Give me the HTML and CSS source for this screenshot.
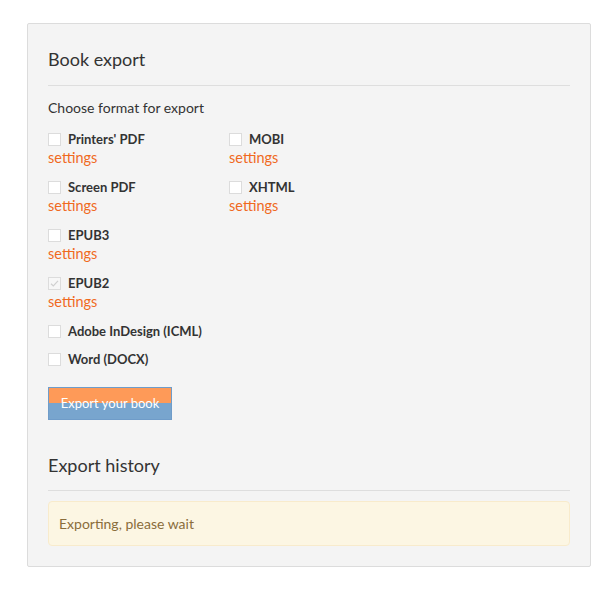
FILE: index.html
```html
<!DOCTYPE html>
<html>
<head>
<meta charset="utf-8">
<link rel="stylesheet" href="styles.css">
</head>
<body>
<div class="card">
  <h3 class="title">Book export</h3>
  <p class="lead">Choose format for export</p>
  <div class="formats">
    <div class="col">
      <div class="fmt"><label class="opt"><span class="box"></span>Printers' PDF</label><a class="settings">settings</a></div>
      <div class="fmt"><label class="opt"><span class="box"></span>Screen PDF</label><a class="settings">settings</a></div>
      <div class="fmt"><label class="opt"><span class="box"></span>EPUB3</label><a class="settings">settings</a></div>
      <div class="fmt"><label class="opt"><span class="box checked"><svg viewBox="0 0 13 13" width="13" height="13"><path d="M3 6.8 L5.3 9 L10 3.8" fill="none" stroke="#d0d0d0" stroke-width="1.2"/></svg></span>EPUB2</label><a class="settings">settings</a></div>
      <div class="fmt"><label class="opt"><span class="box"></span>Adobe InDesign (ICML)</label></div>
      <div class="fmt"><label class="opt"><span class="box"></span>Word (DOCX)</label></div>
    </div>
    <div class="col">
      <div class="fmt"><label class="opt"><span class="box"></span>MOBI</label><a class="settings">settings</a></div>
      <div class="fmt"><label class="opt"><span class="box"></span>XHTML</label><a class="settings">settings</a></div>
    </div>
  </div>
  <button class="export">Export your book</button>
  <h3 class="title history">Export history</h3>
  <div class="alert">Exporting, please wait</div>
</div>
</body>
</html>
```
FILE: styles.css
```css
html, body {
  margin: 0;
  background: #fff;
}
body {
  padding: 23px 0 0 27px;
  font-family: Lato, "Open Sans", sans-serif;
  color: #333;
}
.card {
  width: 522px;
  background: #f4f4f4;
  border: 1px solid #dcdcdc;
  border-radius: 2px;
  padding: 20px 20px 20px 20px;
}
.title {
  margin: 0;
  font-size: 18px;
  font-weight: 400;
  line-height: 26px;
  padding-top: 2px;
  padding-bottom: 13px;
  border-bottom: 1px solid #dedede;
  color: #333;
}
.lead {
  margin: 12px 0 11px;
  font-size: 14px;
  line-height: 20px;
}
.formats {
  display: flex;
}
.col {
  width: 181px;
  display: flex;
  flex-direction: column;
}
.fmt {
  display: flex;
  flex-direction: column;
  margin-bottom: 9px;
}
.opt {
  display: flex;
  align-items: center;
  font-size: 13px;
  font-weight: 700;
  line-height: 17px;
  padding-top: 2px;
  color: #333;
}
.box {
  width: 11px;
  height: 11px;
  background: #fff;
  border: 1px solid #dcdcdc;
  margin-right: 7px;
  position: relative;
}
.box svg {
  position: absolute;
  left: -1px;
  top: -1px;
}
.box.checked {
  background: #f7f7f7;
}
.settings {
  font-size: 14.5px;
  line-height: 20px;
  color: #f06a1e;
  cursor: pointer;
}
.export {
  display: block;
  margin-top: 10px;
  width: 124px;
  height: 33px;
  border: 1px solid #6f9cc9;
  background: linear-gradient(to bottom, #fe9a58 0, #fe9a58 50%, #78a5ce 50%, #78a5ce 100%);
  color: #fff;
  font-family: Lato, "Open Sans", sans-serif;
  font-size: 13px;
  padding: 0 0 2px;
}
.history {
  margin-top: 32px;
  padding-top: 0;
  padding-bottom: 12px;
}
.alert {
  margin-top: 10px;
  height: 43px;
  line-height: 43px;
  padding: 0 10px;
  background: #fcf6e3;
  border: 1px solid #f8ebcc;
  border-radius: 4px;
  color: #8a6d3b;
  font-size: 14px;
}
```
